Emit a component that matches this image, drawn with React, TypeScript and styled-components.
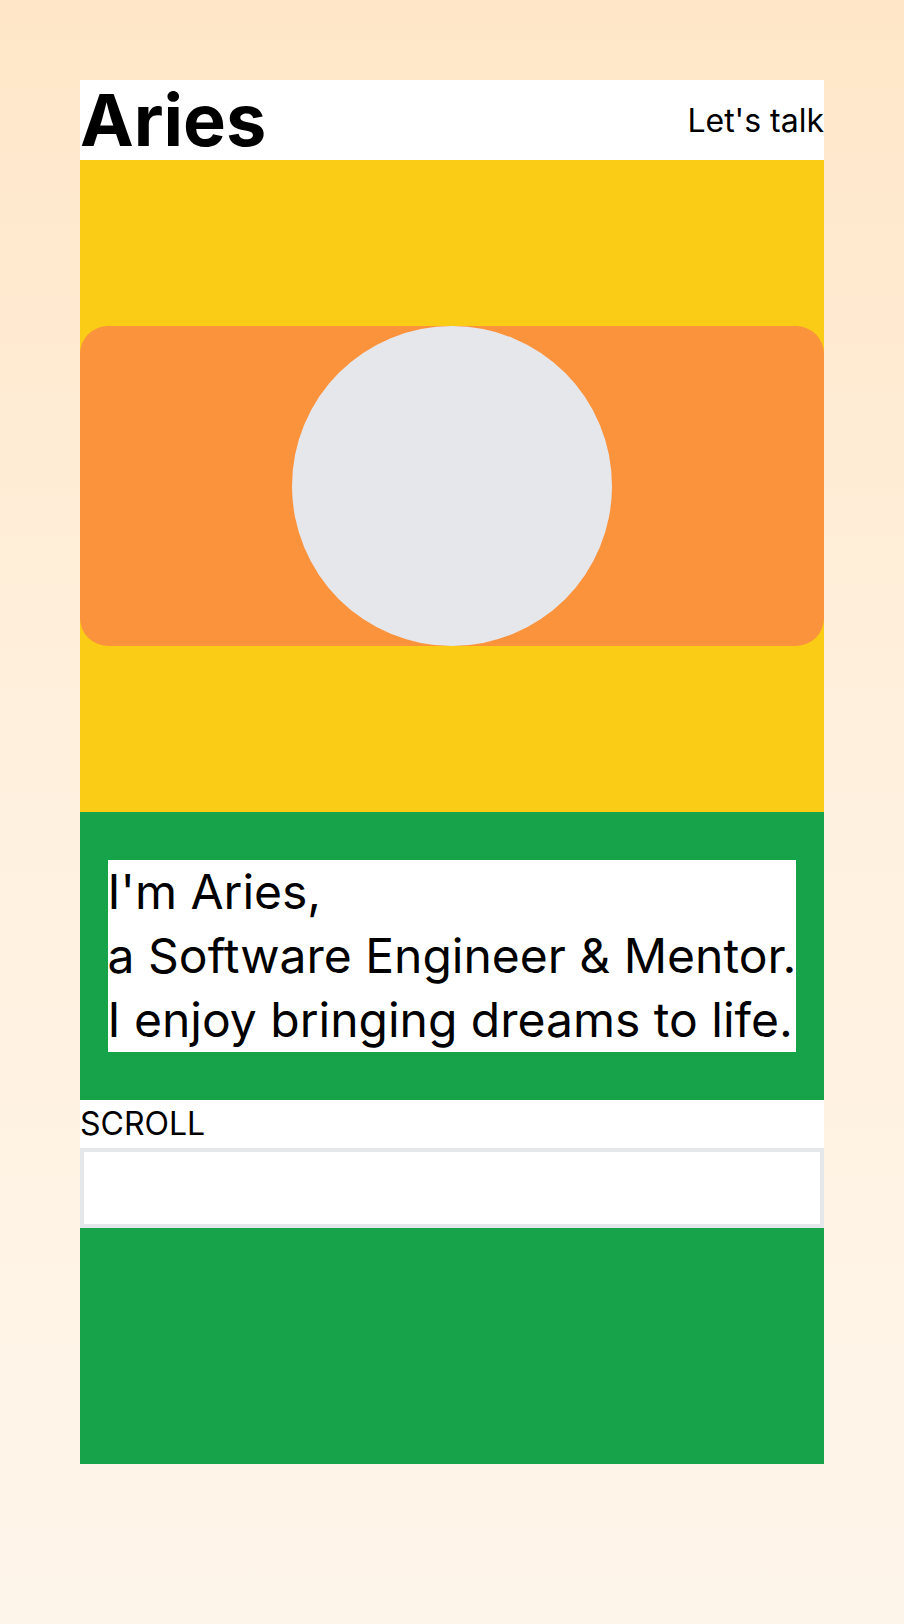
import React from "react";
import styled, { createGlobalStyle } from "styled-components";

const GlobalStyle = createGlobalStyle`
  html, body {
    margin: 0;
    padding: 0;
  }
  body {
    font-family: Inter, "Noto Sans", "Liberation Sans", sans-serif;
    color: #000;
    background: linear-gradient(to bottom, #ffe6c8 0%, #fef5ea 100%);
    min-height: 100vh;
  }
  * { box-sizing: border-box; }
`;

const Page = styled.main`
  min-height: 1624px;
  padding: 80px;
  background: linear-gradient(to bottom, #ffe6c8 0%, #fff1df 50%, #fef5ea 100%);
`;

const Header = styled.header`
  display: flex;
  align-items: center;
  justify-content: space-between;
  height: 80px;
  background: #ffffff;
`;

const Logo = styled.h1`
  margin: 0;
  font-size: 72px;
  line-height: 1;
  font-weight: 700;
`;

const TalkLink = styled.a`
  font-size: 32px;
  line-height: 48px;
  padding-top: 2px;
  color: #000;
  text-decoration: none;
`;

const Hero = styled.section`
  display: flex;
  align-items: center;
  height: 652px;
  background: #facc15;
`;

const Banner = styled.div`
  display: flex;
  justify-content: center;
  width: 100%;
  height: 320px;
  border-radius: 28px;
  background: #fb923c;
`;

const Avatar = styled.div`
  width: 320px;
  height: 320px;
  border-radius: 50%;
  background: #e5e7eb;
`;

const Intro = styled.section`
  display: flex;
  justify-content: center;
  padding: 48px 0;
  background: #16a34a;
`;

const IntroText = styled.p`
  margin: 0;
  width: fit-content;
  background: #ffffff;
  font-size: 48px;
  line-height: 64px;
  font-weight: 400;
  white-space: nowrap;
`;

const ScrollLabel = styled.div`
  background: #ffffff;
  font-size: 32px;
  line-height: 48px;
`;

const EmptyBox = styled.div`
  height: 80px;
  border: 4px solid #e5e7eb;
  background: #ffffff;
`;

const Footer = styled.section`
  height: 236px;
  background: #16a34a;
`;

export default function App() {
  return (
    <>
      <GlobalStyle />
      <Page>
        <Header>
          <Logo>Aries</Logo>
          <TalkLink href="#">Let's talk</TalkLink>
        </Header>
        <Hero>
          <Banner>
            <Avatar />
          </Banner>
        </Hero>
        <Intro>
          <IntroText>
            I'm Aries,
            <br />
            a Software Engineer &amp; Mentor.
            <br />
            I enjoy bringing dreams to life.
          </IntroText>
        </Intro>
        <ScrollLabel>SCROLL</ScrollLabel>
        <EmptyBox />
        <Footer />
      </Page>
    </>
  );
}
